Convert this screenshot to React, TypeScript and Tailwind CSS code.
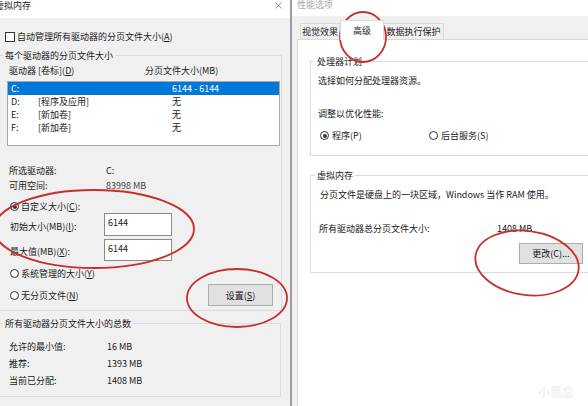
import { X } from "lucide-react";

const font = "font-['Noto_Sans_CJK_SC','Noto_Sans',sans-serif]";

function Key({ k }: { k: string }) {
  return <span className="underline underline-offset-[1px]">{k}</span>;
}

function Radio({ on }: { on?: boolean }) {
  return (
    <span className="flex h-[9px] w-[9px] shrink-0 items-center justify-center rounded-full border border-[#333] bg-white">
      {on ? <span className="h-[4px] w-[4px] rounded-full bg-[#333]" /> : null}
    </span>
  );
}

function Button({ children, className = "" }: { children: React.ReactNode; className?: string }) {
  return (
    <div
      className={`flex items-center justify-center border border-[#adadad] bg-[#e1e1e1] text-[9px] leading-none text-[#111] ${className}`}
    >
      {children}
    </div>
  );
}

const drives = [
  { d: "C:", label: "", size: "6144 - 6144", sel: true },
  { d: "D:", label: "[程序及应用]", size: "无" },
  { d: "E:", label: "[新加卷]", size: "无" },
  { d: "F:", label: "[新加卷]", size: "无" },
];

function VirtualMemory() {
  return (
    <div className="flex w-[290px] shrink-0 flex-col bg-[#f0f0f0] text-[9px] leading-[13px] text-[#1a1a1a]">
      <div className="flex h-[18px] items-start justify-between bg-white">
        <span className="-ml-[5px] leading-[11px]">虚拟内存</span>
        <X size={11} strokeWidth={1.2} className="mr-[6px] text-[#333]" />
      </div>

      <div className="ml-[5px] mt-[12px] flex h-[13px] items-center gap-[2px]">
        <span className="h-[10px] w-[10px] border border-[#333] bg-white" />
        <span>
          自动管理所有驱动器的分页文件大小(<Key k="A" />)
        </span>
      </div>

      <fieldset className="-ml-[2px] mr-[8px] mt-[6px] border border-[#dcdcdc] pb-[4px]">
        <legend className="ml-[4px] px-[2px] leading-[13px]">每个驱动器的分页文件大小</legend>
        <div className="mt-[2px] flex pl-[10px]">
          <span className="w-[136px]">
            驱动器 [卷标](<Key k="D" />)
          </span>
          <span>分页文件大小(MB)</span>
        </div>
        <div className="ml-[8px] mr-[1px] mt-[4px] h-[65px] border border-[#a8a8a8] bg-white">
          {drives.map((r) => (
            <div
              key={r.d}
              className={`flex h-[13px] items-center pl-[3px] ${r.sel ? "bg-[#0078d7] text-white" : ""}`}
            >
              <span className="w-[27px]">{r.d}</span>
              <span className="w-[134px]">{r.label}</span>
              <span>{r.size}</span>
            </div>
          ))}
        </div>

        <div className="mt-[17px] flex h-[15px] items-center pl-[10px]">
          <span className="w-[97px]">所选驱动器:</span>
          <span>C:</span>
        </div>
        <div className="flex h-[15px] items-center pl-[10px]">
          <span className="w-[97px]">可用空间:</span>
          <span className="text-[#444]">83998 MB</span>
        </div>

        <div className="mt-[7px] flex h-[13px] items-center gap-[2px] pl-[11px]">
          <Radio on />
          <span>
            自定义大小(<Key k="C" />):
          </span>
        </div>
        <div className="flex h-[23px] items-center pl-[11px]">
          <span className="w-[94px] pt-[3px]">
            初始大小(MB)(<Key k="I" />):
          </span>
          <div className="h-[23px] w-[68px] border border-[#8a8a8a] bg-white pl-[3px] pt-[2px]">6144</div>
        </div>
        <div className="mt-[3px] flex h-[22px] items-center pl-[11px]">
          <span className="w-[94px] pt-[2px]">
            最大值(MB)(<Key k="X" />):
          </span>
          <div className="h-[22px] w-[68px] border border-[#8a8a8a] bg-white pl-[3px] pt-[2px]">6144</div>
        </div>

        <div className="mt-[6px] flex h-[13px] items-center gap-[2px] pl-[11px]">
          <Radio />
          <span>
            系统管理的大小(<Key k="Y" />)
          </span>
        </div>
        <div className="mt-[4px] flex h-[22px] items-center justify-between pl-[11px] pr-[8px]">
          <div className="flex items-center gap-[2px]">
            <Radio />
            <span>
              无分页文件(<Key k="N" />)
            </span>
          </div>
          <Button className="h-[22px] w-[65px]">
            设置(<Key k="S" />)
          </Button>
        </div>
      </fieldset>

      <fieldset className="-ml-[2px] mr-[9px] mt-[6px] border border-[#dcdcdc] pb-[7px]">
        <legend className="ml-[4px] px-[2px] leading-[13px]">所有驱动器分页文件大小的总数</legend>
        <div className="mt-[8px] flex h-[17px] items-center pl-[10px]">
          <span className="w-[98px]">允许的最小值:</span>
          <span>16 MB</span>
        </div>
        <div className="flex h-[17px] items-center pl-[10px]">
          <span className="w-[98px]">推荐:</span>
          <span>1393 MB</span>
        </div>
        <div className="flex h-[17px] items-center pl-[10px]">
          <span className="w-[98px]">当前已分配:</span>
          <span>1408 MB</span>
        </div>
      </fieldset>
    </div>
  );
}

function PerformanceOptions() {
  return (
    <div className="flex w-[296px] shrink-0 flex-col bg-[#f0f0f0] text-[9px] leading-[13px] text-[#1a1a1a]">
      <div className="flex h-[16px] items-start bg-white pl-[5px]">
        <span className="-mt-[1px] leading-[11px] text-[#a8a8a8]">性能选项</span>
      </div>

      <div className="mt-[4px] flex items-end pl-[8px]">
        <div className="flex h-[16px] w-[40px] items-center justify-center border border-b-0 border-[#d9d9d9] bg-[#f0f0f0]">
          视觉效果
        </div>
        <div className="relative z-10 -mb-px flex h-[20px] w-[44px] items-start justify-center border border-b-0 border-[#d9d9d9] bg-white pt-[3px]">
          高级
        </div>
        <div className="flex h-[16px] w-[60px] items-center justify-center border border-b-0 border-l-0 border-[#d9d9d9] bg-[#f0f0f0]">
          数据执行保护
        </div>
      </div>

      <div className="ml-[5px] w-[300px] flex-1 border-l border-t border-[#d9d9d9] bg-white">
        <fieldset className="ml-[12px] mt-[15px] border border-[#dcdcdc] pb-[13px]">
          <legend className="ml-[4px] px-[2px] leading-[13px]">处理器计划</legend>
          <div className="mt-[6px] pl-[7px]">选择如何分配处理器资源。</div>
          <div className="mt-[20px] pl-[7px]">调整以优化性能:</div>
          <div className="mt-[9px] flex h-[13px] items-center pl-[9px]">
            <div className="flex w-[109px] items-center gap-[3px]">
              <Radio on />
              <span>程序(P)</span>
            </div>
            <div className="flex items-center gap-[3px]">
              <Radio />
              <span>后台服务(S)</span>
            </div>
          </div>
        </fieldset>

        <fieldset className="ml-[12px] mt-[13px] border border-[#dcdcdc] pb-[8px]">
          <legend className="ml-[4px] px-[2px] leading-[13px]">虚拟内存</legend>
          <div className="mt-[6px] pl-[9px]">分页文件是硬盘上的一块区域，Windows 当作 RAM 使用。</div>
          <div className="mt-[21px] flex pl-[8px]">
            <span className="w-[178px]">所有驱动器总分页文件大小:</span>
            <span>1408 MB</span>
          </div>
          <div className="mt-[8px] pl-[208px]">
            <Button className="h-[21px] w-[64px]">更改(C)...</Button>
          </div>
        </fieldset>
      </div>
    </div>
  );
}

export default function App() {
  return (
    <div className={`relative flex h-[406px] w-[588px] overflow-hidden bg-white ${font}`}>
      <VirtualMemory />
      <div className="w-[2px] shrink-0 bg-[#9c9c9c]" />
      <PerformanceOptions />

      <svg className="pointer-events-none absolute inset-0" width="588" height="406" viewBox="0 0 588 406">
        <g fill="none" stroke="#c5302c" strokeWidth="1.8">
          <ellipse cx="363" cy="37" rx="23" ry="25" />
          <ellipse cx="94" cy="229" rx="100" ry="39" />
          <ellipse cx="237" cy="298" rx="50" ry="29" />
          <ellipse cx="527" cy="263" rx="52" ry="32" transform="rotate(8 527 263)" />
        </g>
      </svg>
      <span className="pointer-events-none absolute bottom-[5px] right-[14px] text-[12px] font-bold text-[#f2f2f2]">
        小黑盒
      </span>
    </div>
  );
}
